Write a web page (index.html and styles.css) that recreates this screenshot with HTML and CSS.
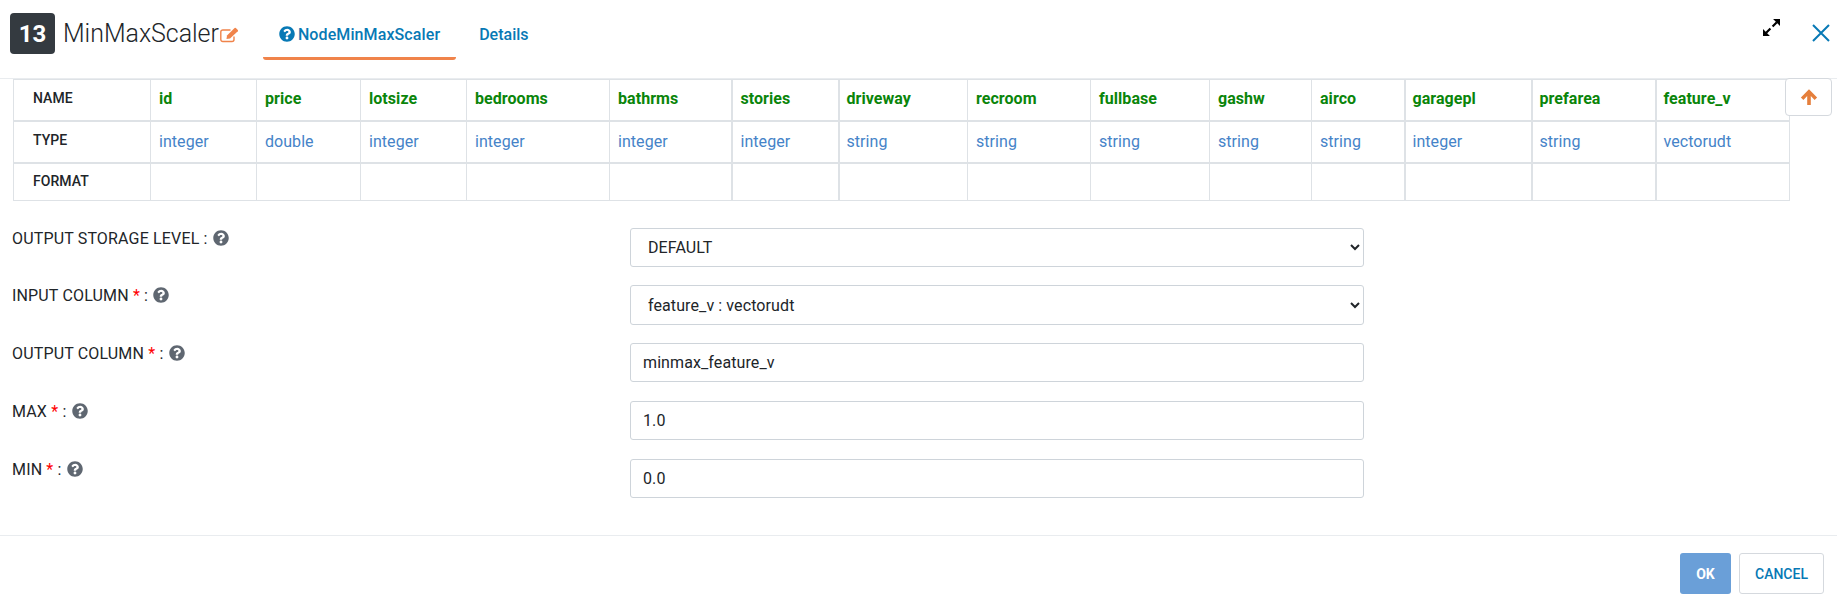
FILE: index.html
```html
<!DOCTYPE html>
<html lang="en">
<head>
<meta charset="utf-8">
<title>MinMaxScaler</title>
<link rel="stylesheet" href="styles.css">
</head>
<body>
<svg class="defs" aria-hidden="true"><defs>
<symbol id="q" viewBox="0 0 512 512"><path d="M504 256c0 136.997-111.043 248-248 248S8 392.997 8 256C8 119.083 119.043 8 256 8s248 111.083 248 248zM262.655 90c-54.497 0-89.255 22.957-116.549 63.758-3.536 5.286-2.353 12.415 2.715 16.258l34.699 26.31c5.205 3.947 12.621 3.008 16.665-2.122 17.864-22.658 30.113-35.797 57.303-35.797 20.429 0 45.698 13.148 45.698 32.958 0 14.976-12.363 22.667-32.534 33.976C247.128 238.528 216 254.941 216 296v4c0 6.627 5.373 12 12 12h56c6.627 0 12-5.373 12-12v-1.333c0-28.462 83.186-29.647 83.186-106.667 0-58.002-60.165-102-116.531-102zM256 338c-25.365 0-46 20.635-46 46 0 25.364 20.635 46 46 46s46-20.636 46-46c0-25.365-20.635-46-46-46z"/></symbol>
</defs></svg>
<div class="modal">
  <header class="head">
    <span class="badge">13</span>
    <span class="title">MinMaxScaler</span>
    <svg class="edit" viewBox="0 0 19 16" aria-hidden="true"><path class="edit-box" d="M14 9.500v3a2 2 0 0 1-2 2H2.800a2 2 0 0 1-2-2V5a2 2 0 0 1 2-2h7.700"/><path class="edit-pen" d="M6.500 12l.5-3.500L14.600 1a.9.9 0 0 1 1.200 0l2 2a.9.9 0 0 1 0 1.200L10 11.600z"/></svg>
    <nav class="tabs">
      <a class="tab active"><svg class="tab-q"><use href="#q"/></svg>NodeMinMaxScaler</a>
      <a class="tab">Details</a>
    </nav>
    <div class="head-tools">
      <svg class="expand" viewBox="0 0 16 16" aria-hidden="true"><path class="expand-head" d="M9.500 0H16v6.500zM0 9.500V16h6.500z"/><path class="expand-shaft" d="M13 3L9 7M3 13l4-4"/></svg>
      <svg class="close" viewBox="0 0 18 18" aria-hidden="true"><path d="M1 1l16 16M17 1L1 17"/></svg>
    </div>
  </header>
  <main class="content">
    <button class="up" type="button" aria-label="Collapse"><svg viewBox="0 0 16 16"><path d="M8 1.200L15.200 8.400 13 10.600 9.600 7.200V15H6.400V7.200L3 10.600.8 8.400z"/></svg></button>
    <table class="schema">
      <colgroup>
        <col class="c0"><col class="c1"><col class="c2"><col class="c3"><col class="c4"><col class="c5"><col class="c6"><col class="c7"><col class="c8"><col class="c9"><col class="c10"><col class="c11"><col class="c12"><col class="c13"><col class="c14">
      </colgroup>
      <tr class="r-name"><th>NAME</th><td>id</td><td>price</td><td>lotsize</td><td>bedrooms</td><td>bathrms</td><td>stories</td><td>driveway</td><td>recroom</td><td>fullbase</td><td>gashw</td><td>airco</td><td>garagepl</td><td>prefarea</td><td>feature_v</td></tr>
      <tr class="r-type"><th>TYPE</th><td>integer</td><td>double</td><td>integer</td><td>integer</td><td>integer</td><td>integer</td><td>string</td><td>string</td><td>string</td><td>string</td><td>string</td><td>integer</td><td>string</td><td>vectorudt</td></tr>
      <tr class="r-format"><th>FORMAT</th><td></td><td></td><td></td><td></td><td></td><td></td><td></td><td></td><td></td><td></td><td></td><td></td><td></td><td></td></tr>
    </table>
    <form class="form">
      <div class="row row-first">
        <label class="lbl">OUTPUT STORAGE LEVEL : <svg class="help"><use href="#q"/></svg></label>
        <select class="ctl"><option>DEFAULT</option></select>
      </div>
      <div class="row">
        <label class="lbl">INPUT COLUMN <span class="req">*</span> : <svg class="help"><use href="#q"/></svg></label>
        <select class="ctl tall"><option>feature_v : vectorudt</option></select>
      </div>
      <div class="row">
        <label class="lbl">OUTPUT COLUMN <span class="req">*</span> : <svg class="help"><use href="#q"/></svg></label>
        <input class="ctl" type="text" value="minmax_feature_v">
      </div>
      <div class="row">
        <label class="lbl">MAX <span class="req">*</span> : <svg class="help"><use href="#q"/></svg></label>
        <input class="ctl" type="text" value="1.0">
      </div>
      <div class="row">
        <label class="lbl">MIN <span class="req">*</span> : <svg class="help"><use href="#q"/></svg></label>
        <input class="ctl" type="text" value="0.0">
      </div>
    </form>
  </main>
  <footer class="foot">
    <button class="btn ok" type="button">OK</button>
    <button class="btn cancel" type="button">CANCEL</button>
  </footer>
</div>
</body>
</html>
```

FILE: styles.css
```css
* { box-sizing: border-box; }
html, body { margin: 0; padding: 0; background: #fff; }
body { font-family: Roboto, "Liberation Sans", sans-serif; color: #212529; width: 1837px; height: 600px; overflow: hidden; }
.defs { width: 0; height: 0; position: absolute; }
.modal { display: flex; flex-direction: column; height: 600px; }

.head { height: 79px; flex: none; display: flex; align-items: flex-start; border-bottom: 1px solid #e9ecef; padding: 13px 7px 0 10px; }
.badge { width: 45px; height: 41px; background: #343a40; color: #fff; border-radius: 4px; font-size: 24px; font-weight: 700; display: flex; align-items: center; justify-content: center; }
.title { font-size: 25px; font-weight: 300; margin-left: 8px; line-height: 42px; color: #212529; letter-spacing: -0.03px; }
.edit { width: 19px; height: 16px; margin: 14px 0 0 1px; }
.edit-box { fill: none; stroke: #f0834a; stroke-width: 1.4; }
.edit-pen { fill: #f0834a; }
.tabs { display: flex; margin-left: 24px; margin-top: -13px; gap: 7px; }
.tab { height: 60px; padding: 11px 16px 0; display: flex; align-items: center; gap: 3px; font-size: 16px; font-weight: 500; color: #0779b5; border-bottom: 3px solid transparent; border-radius: 0 0 3px 3px; }
.tab.active { border-bottom-color: #f0834a; letter-spacing: .1px; }
.tab-q { width: 16px; height: 16px; fill: #0779b5; }
.head-tools { margin-left: auto; display: flex; align-items: center; gap: 32px; margin-top: 11px; }
.expand { width: 17px; height: 17px; margin-top: -11px; }
.expand-head { fill: #000; }
.expand-shaft { stroke: #000; stroke-width: 2; fill: none; }
.close { width: 18px; height: 18px; stroke: #0779b5; stroke-width: 2; fill: none; }

.content { flex: 1; position: relative; padding-left: 13px; }
.up { position: absolute; left: 1785px; top: -1px; width: 47px; height: 38px; padding: 0; background: #fff; border: 1px solid #d5d9de; border-radius: 4px; display: flex; align-items: center; justify-content: center; }
.up svg { width: 18px; height: 18px; fill: #e57f3c; }

.schema { border-collapse: collapse; table-layout: fixed; width: 1776px; font-size: 16px; letter-spacing: .05px; }
.schema th, .schema td { border: 1px solid #dee2e6; padding: 0 8px; text-align: left; white-space: nowrap; }
.schema th { font-size: 14px; font-weight: 500; color: #212529; padding-left: 19px; padding-bottom: 3px; }
.c0 { width: 137px; } .c1 { width: 106px; } .c2 { width: 104px; } .c3 { width: 106px; } .c4 { width: 143px; }
.c5 { width: 122px; } .c6 { width: 107px; } .c7 { width: 129px; } .c8 { width: 123px; } .c9 { width: 119px; }
.c10 { width: 102px; } .c11 { width: 93px; } .c12 { width: 127px; } .c13 { width: 124px; } .c14 { width: 134px; }
.r-name { height: 41px; }
.r-type { height: 42px; }
.r-format { height: 38px; }
.r-name td { color: #0a850a; font-weight: 700; padding-bottom: 2px; }
.r-type td { color: #4583c8; }
.r-name td, .r-name th, .r-type td, .r-type th { border-bottom-width: 2px; }
.r-format th { padding-bottom: 1px; }
.schema td:nth-child(7), .schema td:nth-child(8), .schema td:nth-child(13), .schema td:nth-child(14), .schema td:nth-child(15) { border-left-width: 2px; }
.schema td:nth-child(8), .schema td:nth-child(13), .schema td:nth-child(14), .schema td:nth-child(15) { padding-left: 7px; }

.form { margin-top: 27px; display: flex; flex-direction: column; gap: 19px; margin-left: -1px; }
.row { display: grid; grid-template-columns: 618px 734px; height: 39px; }
.row-first { margin-bottom: -1px; }
.lbl { font-size: 16px; line-height: 19px; padding-top: 1px; display: block; white-space: pre; color: #212529; letter-spacing: .16px; }
.req { color: #f00; }
.help { width: 16px; height: 16px; fill: #5f6771; vertical-align: -2px; margin-left: 1px; }
.ctl { width: 734px; height: 39px; border: 1px solid #ced4da; border-radius: 3px; background: #fff; font-family: Roboto, sans-serif; font-size: 16px; color: #212529; padding: 0 12px; letter-spacing: .1px; }
select.ctl { padding-left: 13px; }
.ctl.tall { height: 40px; }

.foot { height: 65px; flex: none; border-top: 1px solid #e9ecef; display: flex; justify-content: flex-end; gap: 8px; padding: 17px 13px 0 0; }
.btn { height: 41px; border-radius: 3px; font-family: Roboto, sans-serif; font-size: 14px; font-weight: 500; padding: 0; }
.ok { width: 51px; background: #6a9fd8; border: 0; color: #fff; font-weight: 700; }
.cancel { width: 85px; background: #fff; border: 1px solid #d5d9de; color: #0779b5; }
```
